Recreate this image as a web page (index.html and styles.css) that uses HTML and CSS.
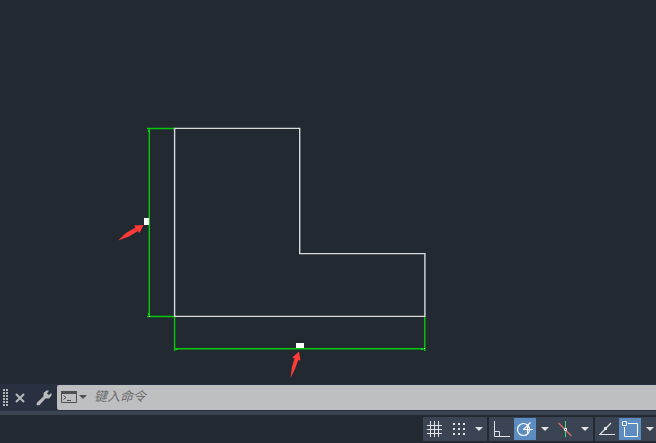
FILE: index.html
```html
<!DOCTYPE html>
<html lang="zh-CN">
<head>
<meta charset="utf-8">
<title>CAD</title>
<link rel="stylesheet" href="styles.css">
</head>
<body>
<main class="canvas">
<svg class="drawing" width="656" height="384" viewBox="0 0 656 384" aria-hidden="true">
  <g fill="none" stroke-width="1.4">
    <path stroke="#08c80c" d="M147 128.5H175M149.300 128V317M147 316.500H175M174.600 317V351M424.800 317V351M174 348.800H425"/>
    <path stroke="#d8dadc" d="M174.600 128.400H299.700V253.600H424.900V316.400H174.600Z"/>
  </g>
  <path fill="#08d00c" d="M148 130h2v2h-2zM148 313h2v2h-2zM176 348h2v2h-2zM421 348h2v2h-2z"/>
  <path fill="#d9ffd9" d="M149 316h1v1h-1zM424 348h1v1h-1z"/>
  <path fill="#fff" d="M144 218h5v7h-5zM296 343h8v5h-8z"/>
  <path fill="#ff3b38" d="M118 240.500L126 233L135.500 227.500L134 225.500L143.500 225L139.500 233L138 231L129 236.500ZM290.500 378L292 367L294.500 358.500L292.300 357.500L299 351.500L300.500 360.500L298.300 360L295 369Z"/>
</svg>
</main>
<section class="command">
  <svg class="grip" width="6" height="18" viewBox="0 0 6 18" aria-hidden="true"><path stroke="#b2b4b6" stroke-width="2" stroke-dasharray="2 1" d="M1 0V18M4 0V18"/></svg>
  <button class="tool" aria-label="关闭"><svg width="12" height="12" viewBox="0 0 12 12"><path fill="none" stroke="#b5b7ba" stroke-width="2" d="M2 2L10 10M10 2L2 10"/></svg></button>
  <button class="tool" aria-label="自定义"><svg width="16" height="16" viewBox="0 0 16 16"><path fill="#b8babc" d="M10.500 0.500L13 0.500L11 3.500L12.500 5L15.500 3V5.500L13 8.500L9.500 8.500L3.500 15L1.500 15.500L0.500 14.500L1 12.500L7.500 6.500V3Z"/></svg></button>
  <div class="entry">
    <button class="recent" aria-label="最近使用的命令"><svg width="27" height="13" viewBox="0 0 27 13"><path fill="#505153" d="M0 0H16V3H0ZM18 4H26L22 8Z"/><path fill="none" stroke="#505153" d="M.5.5H15.500V11.500H.5ZM2.500 4.500L5 6.500L2.500 8.500M6 9.500H10"/></svg></button>
    <input class="field" type="text" placeholder="键入命令" aria-label="键入命令">
  </div>
</section>
<footer class="status">
  <div class="group">
    <button class="mode" aria-label="栅格"><svg width="16" height="16" viewBox="0 0 16 16"><path stroke="#dfe1e4" d="M3.500 0V16M7.500 0V16M11.500 0V16M0 4.500H15M0 8.500H15M0 12.500H15"/></svg></button>
    <button class="mode" aria-label="捕捉"><svg width="14" height="14" viewBox="0 0 14 14"><path stroke="#dfe1e4" stroke-width="2" stroke-dasharray="2 3" d="M1 2H13M1 7H13M1 12H13"/></svg></button>
    <button class="more narrow" aria-label="捕捉设置"><svg width="8" height="4" viewBox="0 0 8 4"><path fill="#dfe1e4" d="M0 0H8L4 4Z"/></svg></button>
  </div>
  <div class="group">
    <button class="mode ortho" aria-label="正交"><svg width="16" height="16" viewBox="0 0 16 16"><path fill="none" stroke="#dfe1e4" d="M.5 0V15.500H16M.5 10.500H5.500V15.500"/></svg></button>
    <button class="mode active" aria-label="极轴追踪"><svg width="18" height="16" viewBox="0 0 18 16"><circle cx="7.500" cy="8.500" r="6" fill="none" stroke="#fff" stroke-width="1.200"/><path fill="none" stroke="#fff" stroke-width="1.200" d="M7.500 8.500L14.500 1.500M7 8.500H17M11.500 4.500V12"/></svg></button>
    <button class="more" aria-label="极轴设置"><svg width="8" height="4" viewBox="0 0 8 4"><path fill="#dfe1e4" d="M0 0H8L4 4Z"/></svg></button>
    <button class="mode" aria-label="等轴测草图"><svg width="14" height="16" viewBox="0 0 14 16"><path stroke="#df6a70" stroke-width="1.300" d="M.5 2L13.500 15"/><path stroke="#4fdc78" d="M7.500 0V16"/><path fill="#3b4453" stroke="#fff" d="M6.500 7.500h2v2h-2z"/></svg></button>
    <button class="more narrow" aria-label="等轴测设置"><svg width="8" height="4" viewBox="0 0 8 4"><path fill="#dfe1e4" d="M0 0H8L4 4Z"/></svg></button>
  </div>
  <div class="group">
    <button class="mode" aria-label="对象捕捉追踪"><svg width="16" height="14" viewBox="0 0 16 14"><path fill="none" stroke="#dfe1e4" stroke-width="1.200" d="M12 1L.8 12.500H16"/><path fill="#dfe1e4" d="M5 5h3v3h-3z"/></svg></button>
    <button class="mode active" aria-label="对象捕捉"><svg width="16" height="16" viewBox="0 0 16 16"><path fill="none" stroke="#fff" d="M.5.5h4v4h-4zM6 2.500H15.500V15.500H2.500V6"/></svg></button>
    <button class="more" aria-label="对象捕捉设置"><svg width="8" height="4" viewBox="0 0 8 4"><path fill="#dfe1e4" d="M0 0H8L4 4Z"/></svg></button>
  </div>
</footer>
</body>
</html>
```

FILE: styles.css
```css
* {
  box-sizing: border-box;
}

body {
  margin: 0;
  min-height: 100vh;
  display: flex;
  flex-direction: column;
  overflow: hidden;
  background: #222930;
  font-family: "Liberation Sans", "Noto Sans CJK SC", sans-serif;
}

svg {
  display: block;
  flex: none;
}

button {
  display: flex;
  align-items: center;
  justify-content: center;
  flex: none;
  margin: 0;
  padding: 0;
  border: 0;
  background: transparent;
}

.canvas {
  flex: 1;
  overflow: hidden;
}

.command {
  display: flex;
  align-items: center;
  height: 27px;
  padding-left: 3px;
  background: #293140;
}

.tool {
  width: 24px;
  height: 24px;
}

.grip {
  margin-right: -1px;
}

.entry {
  display: flex;
  align-items: center;
  flex: 1;
  height: 25px;
  margin-left: 1px;
  padding-left: 4px;
  border-radius: 2px 0 0 2px;
  background: #bebfc0;
}

.field {
  flex: 1;
  min-width: 0;
  height: 24px;
  margin-left: 6px;
  padding: 0 0 4px;
  border: 0;
  outline: 0;
  background: transparent;
  font: italic 13px "Noto Sans CJK SC", sans-serif;
}

.field::placeholder {
  color: #6b6c6e;
  opacity: 1;
}

.status {
  display: flex;
  justify-content: flex-end;
  gap: 2px;
  height: 32px;
  margin-right: -2px;
  padding-top: 2px;
  border-top: 4px solid #3b4453;
}

.group {
  display: flex;
  align-items: center;
  height: 24px;
  background: #3b4453;
}

.mode {
  width: 24px;
  height: 22px;
}

.ortho {
  width: 25px;
}

.active {
  width: 22px;
  background: #5d8cc0;
}

.more {
  width: 17px;
  height: 22px;
}

.narrow {
  width: 16px;
}
```
